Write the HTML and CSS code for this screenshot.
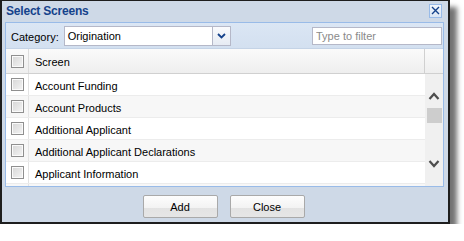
FILE: index.html
```html
<!DOCTYPE html>
<html lang="en">
<head>
    <meta charset="UTF-8">
    <meta name="viewport" content="width=device-width, initial-scale=1.0">
    <title>Select Screens</title>
    <link rel="stylesheet" href="styles.css">
</head>
<body>

<div class="window">
    <!-- Title bar -->
    <div class="titlebar">
        <span class="title">Select Screens</span>
        <div class="tool-close">
            <svg width="9" height="9" viewBox="0 0 9 9"><path d="M1 1 L8 8 M8 1 L1 8" stroke="#15428b" stroke-width="1.4" fill="none"/></svg>
        </div>
    </div>

    <div class="panel">
        <!-- Toolbar -->
        <div class="toolbar">
            <label class="tb-label">Category:</label>
            <div class="combo">
                <span class="combo-value">Origination</span>
                <div class="combo-trigger">
                    <svg width="9" height="6" viewBox="0 0 9 6"><path d="M1 1 L4.5 4.5 L8 1" stroke="#15428b" stroke-width="1.8" fill="none"/></svg>
                </div>
            </div>
            <input type="text" class="filter" placeholder="Type to filter">
        </div>

        <!-- Grid header -->
        <div class="grid-header">
            <div class="cell-check"><span class="checkbox"></span></div>
            <div class="cell-name head-name">Screen</div>
            <div class="cell-pad"></div>
        </div>

        <!-- Grid body -->
        <div class="grid-body">
            <div class="rows">
                <div class="row"><div class="cell-check"><span class="checkbox"></span></div><div class="cell-name">Account Funding</div></div>
                <div class="row alt"><div class="cell-check"><span class="checkbox"></span></div><div class="cell-name">Account Products</div></div>
                <div class="row"><div class="cell-check"><span class="checkbox"></span></div><div class="cell-name">Additional Applicant</div></div>
                <div class="row alt"><div class="cell-check"><span class="checkbox"></span></div><div class="cell-name">Additional Applicant Declarations</div></div>
                <div class="row"><div class="cell-check"><span class="checkbox"></span></div><div class="cell-name">Applicant Information</div></div>
                <div class="row alt"><div class="cell-check"><span class="checkbox"></span></div><div class="cell-name"></div></div>
            </div>
            <div class="scrollbar">
                <svg class="arrow" width="12" height="8" viewBox="0 0 12 8"><path d="M1.5 7 L6 2 L10.5 7" stroke="#4d4d4d" stroke-width="2.2" fill="none"/></svg>
                <div class="thumb"></div>
                <div class="track-space"></div>
                <svg class="arrow" width="12" height="8" viewBox="0 0 12 8"><path d="M1.5 1 L6 6 L10.5 1" stroke="#4d4d4d" stroke-width="2.2" fill="none"/></svg>
            </div>
        </div>
    </div>

    <!-- Buttons -->
    <div class="footer">
        <button class="btn">Add</button>
        <button class="btn">Close</button>
    </div>
</div>

</body>
</html>
```

FILE: styles.css
```css
body {
    margin: 0;
    background: #fff;
    font-family: "Liberation Sans", Arial, sans-serif;
    font-size: 11px;
    color: #000;
}

.window {
    width: 446px;
    height: 221px;
    border: 2px solid #1e1e1e;
    border-top-width: 1px;
    background: #ced9e7;
    box-shadow: 7px 7px 5px rgba(0, 0, 0, 0.55);
    display: flex;
    flex-direction: column;
}

.titlebar {
    height: 21px;
    display: flex;
    align-items: center;
    justify-content: space-between;
    padding: 0 6px 0 4px;
}

.title {
    font-size: 12px;
    font-weight: bold;
    letter-spacing: -0.2px;
    color: #15428b;
    margin-bottom: 2px;
}

.tool-close {
    width: 11px;
    height: 12px;
    margin-bottom: 2px;
    border: 1px solid #99bbe8;
    background: linear-gradient(#f3f7fc, #dbe6f4);
    display: flex;
    align-items: center;
    justify-content: center;
}

.panel {
    margin: 0 4px 0 3px;
    border: 1px solid #99bbe8;
    background: #fff;
}

.toolbar {
    height: 25px;
    border-bottom: 1px solid #c4d3e6;
    background: linear-gradient(#dbe6f4, #d3e0f0);
    display: flex;
    align-items: center;
    padding: 0 1px 0 5px;
}

.tb-label {
    margin-right: 5px;
    margin-top: 2px;
}

.combo {
    width: 165px;
    height: 18px;
    border: 1px solid #b5b8c8;
    background: #fff;
    display: flex;
    align-items: center;
}

.combo-value {
    flex: 1;
    padding-left: 3px;
}

.combo-trigger {
    width: 17px;
    height: 18px;
    border-left: 1px solid #b5b8c8;
    background: linear-gradient(#fafbfd, #e6ebf3);
    display: flex;
    align-items: center;
    justify-content: center;
}

.filter {
    margin-left: auto;
    width: 122px;
    height: 16px;
    padding: 0 3px;
    border: 1px solid #b5b8c8;
    font-family: "Liberation Sans", Arial, sans-serif;
    font-size: 11px;
    outline: none;
}

.filter::placeholder {
    color: #8a8a8a;
}

.grid-header {
    height: 24px;
    display: flex;
    border-bottom: 1px solid #d0d0d0;
    background: linear-gradient(#fafafa, #eeeeee);
}

.cell-check {
    width: 22px;
    border-right: 1px solid #dcdcdc;
    display: flex;
    align-items: center;
    justify-content: center;
}

.cell-name {
    flex: 1;
    display: flex;
    align-items: center;
    padding: 2px 0 0 6px;
}

.head-name {
    border-right: 1px solid #d0d0d0;
}

.cell-pad {
    width: 18px;
}

.checkbox {
    width: 11px;
    height: 11px;
    border: 1px solid #8f8f8f;
    background: linear-gradient(135deg, #d6d6d6, #f4f4f4);
    box-shadow: inset 0 0 0 1px #fafafa;
}

.grid-body {
    height: 112px;
    display: flex;
    overflow: hidden;
}

.rows {
    flex: 1;
}

.row {
    height: 21px;
    display: flex;
    border-bottom: 1px solid #ececec;
}

.row.alt {
    background: #f7f7f7;
}

.row .cell-check {
    border-right-color: #e3e3e3;
}

.scrollbar {
    width: 18px;
    background: #f0f0f0;
    display: flex;
    flex-direction: column;
    align-items: center;
    padding: 18px 0 18px;
    box-sizing: border-box;
}

.thumb {
    width: 15px;
    height: 15px;
    margin-top: 8px;
    margin-left: 1px;
    background: #cdcdcd;
}

.track-space {
    flex: 1;
}

.footer {
    flex: 1;
    display: flex;
    justify-content: center;
    align-items: flex-start;
    gap: 12px;
    padding-top: 8px;
    padding-right: 3px;
}

.btn {
    width: 75px;
    height: 23px;
    border: 1px solid #a9a9a9;
    border-radius: 2px;
    background: linear-gradient(#fdfdfd 0%, #f3f3f3 55%, #e2e2e2 56%, #e6e6e6 100%);
    font-family: "Liberation Sans", Arial, sans-serif;
    font-size: 11px;
    color: #000;
    padding: 0;
}
```
